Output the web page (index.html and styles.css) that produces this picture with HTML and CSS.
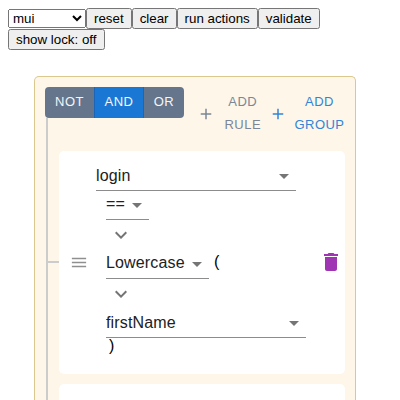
FILE: index.html
```html
<!DOCTYPE html>
<html lang="en">
<head>
<meta charset="utf-8">
<title>Query builder</title>
<link rel="stylesheet" href="styles.css">
</head>
<body>
<div class="toolbar"><select><option>mui</option></select><button>reset</button><button>clear</button><button>run actions</button><button>validate</button><button>show lock: off</button></div>
<main class="group">
  <header class="group-header">
    <div class="conjunctions">
      <button class="conj conj-not">NOT</button><button class="conj conj-and">AND</button><button class="conj conj-or">OR</button>
    </div>
    <div class="actions">
      <button class="action add-rule"><svg viewBox="0 0 24 24"><path d="M19 13h-6v6h-2v-6H5v-2h6V5h2v6h6v2z"/></svg><span>ADD<br>RULE</span></button>
      <button class="action add-group"><svg viewBox="0 0 24 24"><path d="M19 13h-6v6h-2v-6H5v-2h6V5h2v6h6v2z"/></svg><span>ADD<br>GROUP</span></button>
    </div>
  </header>
  <div class="children">
    <section class="rule">
      <svg class="handle" viewBox="0 0 24 24"><path d="M3 18h18v-2H3v2zm0-5h18v-2H3v2zm0-7v2h18V6H3z"/></svg>
      <div class="rule-body">
        <div class="field wide"><span>login</span><svg viewBox="0 0 24 24"><path d="M7 10l5 5 5-5z"/></svg></div>
        <div class="nested">
          <div class="field operator"><span>==</span><svg viewBox="0 0 24 24"><path d="M7 10l5 5 5-5z"/></svg></div>
          <svg class="chevron" viewBox="0 0 24 24"><path d="M16.59 8.59 12 13.17 7.41 8.59 6 10l6 6 6-6z"/></svg>
          <div class="func"><div class="field func-name"><span>Lowercase</span><svg viewBox="0 0 24 24"><path d="M7 10l5 5 5-5z"/></svg></div><span class="paren">(</span></div>
          <svg class="chevron" viewBox="0 0 24 24"><path d="M16.59 8.59 12 13.17 7.41 8.59 6 10l6 6 6-6z"/></svg>
          <div class="field wide"><span>firstName</span><svg viewBox="0 0 24 24"><path d="M7 10l5 5 5-5z"/></svg></div>
          <div class="paren-close">)</div>
        </div>
      </div>
      <svg class="trash" viewBox="0 0 24 24"><path d="M6 19c0 1.1.9 2 2 2h8c1.1 0 2-.9 2-2V7H6v12zM19 4h-3.5l-1-1h-5l-1 1H5v2h14V4z"/></svg>
    </section>
    <section class="rule"></section>
  </div>
</main>
</body>
</html>
```
FILE: styles.css
```css
* { box-sizing: border-box; }
html, body { height: 100%; }
body {
  display: flex;
  flex-direction: column;
  margin: 0;
  padding: 8px 8px 0;
  overflow: hidden;
  background: #fff;
  font-family: "Liberation Sans", Arial, sans-serif;
  font-size: 16px;
  color: #212121;
}
svg { display: block; flex: none; fill: currentColor; }

.toolbar {
  display: flex;
  flex-wrap: wrap;
  align-items: center;
  flex: none;
  width: 340px;
}
.toolbar select { width: 78px; height: 19px; font: 13.333px "Liberation Sans", Arial, sans-serif; }
.toolbar button { height: 21px; font: 13.333px "Liberation Sans", Arial, sans-serif; }

.group {
  flex: 1;
  min-height: 0;
  width: 322px;
  margin: 26px 0 0 26px;
  padding: 10px 10px 0;
  border: 1px solid #dbc88f;
  border-bottom: 0;
  border-radius: 5px 5px 0 0;
  background: #fdf6e9;
  overflow: hidden;
}
.group-header {
  display: flex;
  justify-content: space-between;
  height: 64px;
}
.conjunctions {
  display: flex;
  height: 31px;
  border-radius: 4px;
  overflow: hidden;
}
.conj {
  padding: 0 0 2px;
  border: 0;
  font: 13px/27px "Liberation Sans", Arial, sans-serif;
  letter-spacing: 0.46px;
  color: #f3f6fa;
  background: #65758c;
}
.conj-not { width: 50px; border-right: 1px solid #1a65b8; }
.conj-and { width: 49px; background: #1a78d4; border-right: 1px solid #1a65b8; }
.conj-or { width: 40px; }

.actions { display: flex; margin-top: 4px; }
.action {
  display: flex;
  align-items: center;
  gap: 8px;
  height: 46px;
  padding: 0;
  border: 0;
  background: none;
  font: 13px/22.75px "Liberation Sans", Arial, sans-serif;
  letter-spacing: 0.46px;
}
.action svg { width: 18px; height: 18px; }
.add-rule { width: 72px; gap: 9.5px; color: #7b8797; }
.add-group { width: 76px; gap: 7.5px; color: #3185d8; }

.children {
  position: relative;
  display: flex;
  flex-direction: column;
  gap: 10px;
  padding-left: 14px;
}
.children::before {
  content: "";
  position: absolute;
  left: 1px;
  top: -33px;
  bottom: 0;
  width: 2px;
  background: #ccc;
}
.rule {
  position: relative;
  display: flex;
  align-items: center;
  height: 223px;
  padding: 0 2px 0 10px;
  border-radius: 5px;
  background: #fff;
}
.rule::before {
  content: "";
  position: absolute;
  left: -11px;
  top: 110px;
  width: 11px;
  height: 2px;
  background: #ccc;
}
.handle { width: 20px; height: 19px; margin: 0 7px 1px 0; color: #8f8f8f; }
.rule-body { flex: 1; align-self: flex-start; padding-top: 11px; }
.nested { padding-left: 10px; }
.field {
  display: flex;
  justify-content: space-between;
  height: 29px;
  border-bottom: 1px solid #8c8c8c;
  line-height: 27px;
  letter-spacing: 0.15px;
}
.field svg { width: 24px; height: 24px; margin-top: 2px; color: #757575; }
.wide { width: 200px; }
.operator { width: 43px; line-height: 25px; }
.func-name { width: 103px; line-height: 25px; }
.func { display: flex; line-height: 23px; }
.paren { margin-left: 5px; color: #000; }
.chevron { width: 24px; height: 24px; margin: 3px 0 3px 3px; color: #757575; }
.paren-close { padding-left: 3px; line-height: 15px; color: #000; }
.trash { width: 24px; height: 24px; margin-bottom: 1px; color: #a035b4; }
```
